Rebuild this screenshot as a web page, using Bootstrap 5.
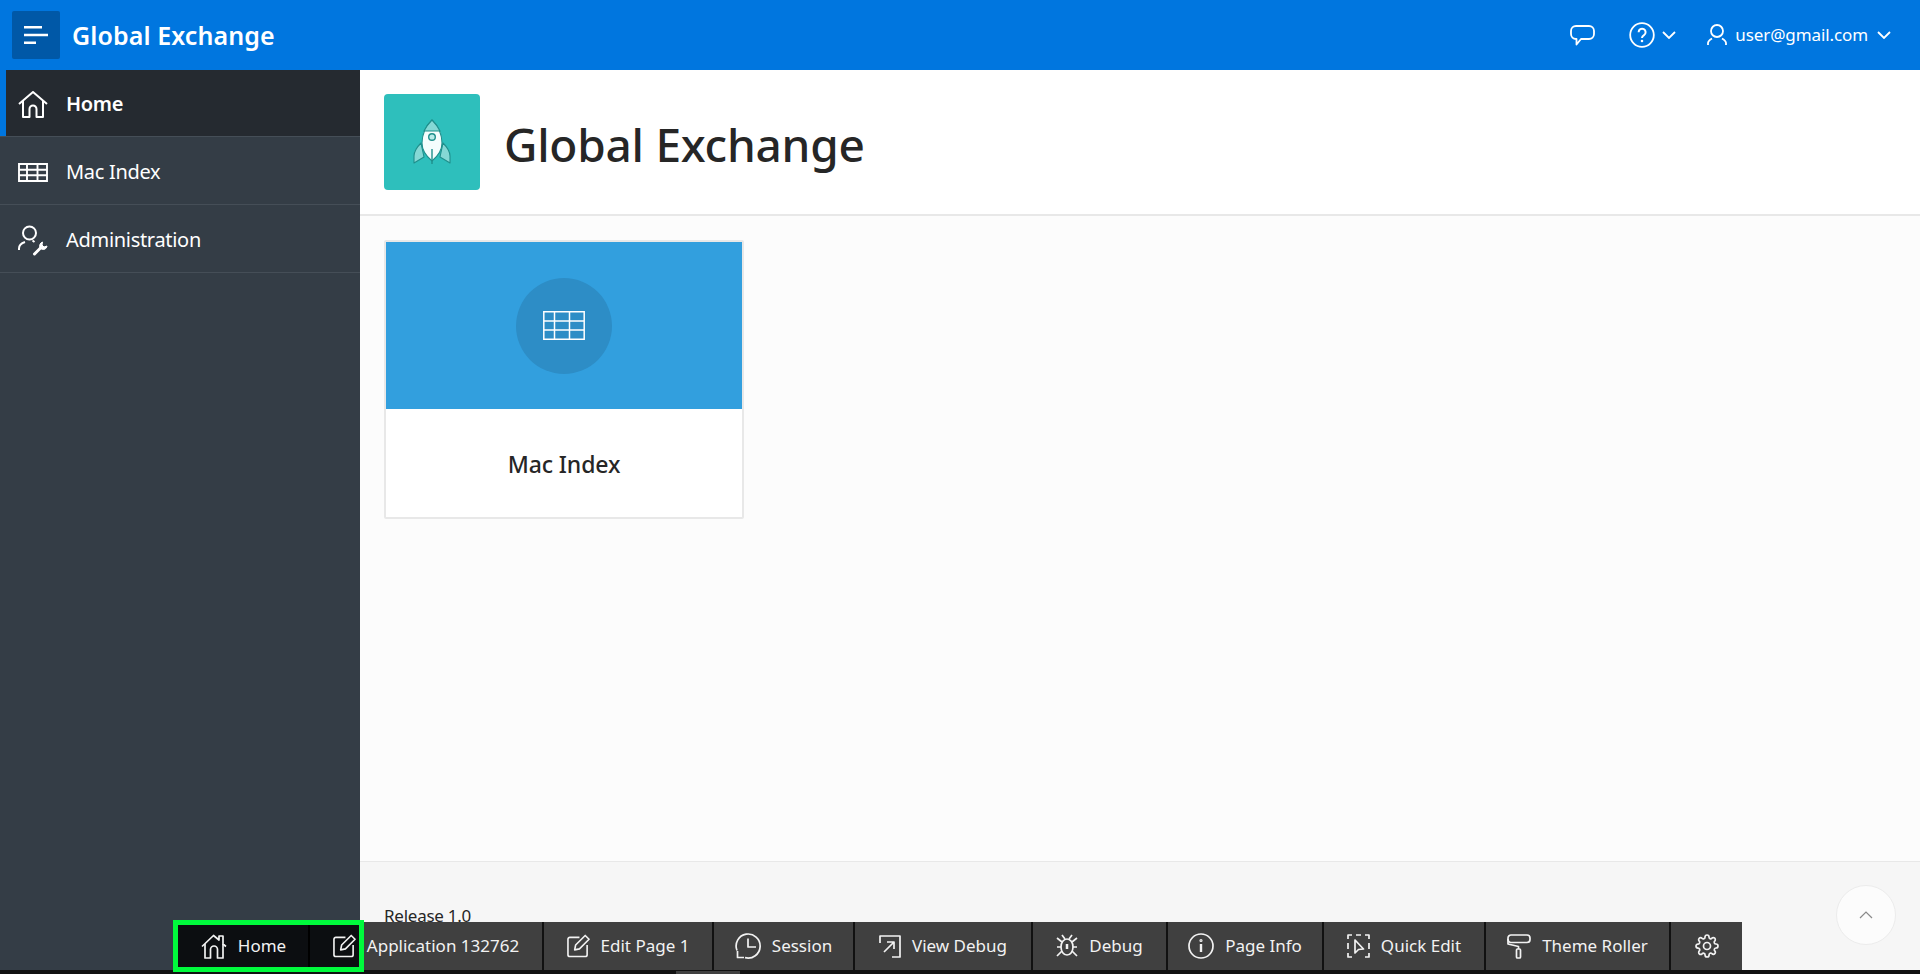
<!DOCTYPE html>
<html lang="en">
<head>
  <meta charset="UTF-8" />
  <title>Global Exchange</title>
  <link href="https://cdn.jsdelivr.net/npm/bootstrap@5.3.2/dist/css/bootstrap.min.css" rel="stylesheet" />
  <style>
    html, body { height: 100%; overflow: hidden; }
    body { font-family: "Noto Sans", "Open Sans", sans-serif; background: #fcfcfc; color: #262626; position: relative; }
    svg { display: block; fill: none; stroke: currentColor; flex: none; }

    .topbar { height: 70px; background: #0076df; color: #fff; padding-left: 12px; padding-right: 29px; }
    .menu-toggle { width: 48px; height: 48px; background: #0058a7; border-radius: 2px; border: 0; margin-right: 12px; color: #fff; }
    .brand-name { font-size: 25px; font-weight: 600; letter-spacing: .1px; padding-top: 2px; }
    .top-link { font-size: 17px; letter-spacing: -.1px; margin: 0 9px 0 8px; }
    .top-help { margin-left: 34px; margin-right: 7px; }
    .top-user { margin-left: 31px; }

    .page-body { height: 904px; }
    .side-nav { width: 360px; background: #343d46; }
    .side-item { height: 68px; color: #fff; font-size: 20px; letter-spacing: -.3px; border-bottom: 1px solid #454e57; padding: 3px 0 0 18px; gap: 18px; }
    .side-item.is-active { background: #252a30; border-left: 6px solid #0076df; padding: 2px 0 0 12px; height: 66px; font-weight: 600; border-bottom: 0; }
    .side-sep { height: 1px; background: #454e57; }

    .hero-bar { height: 146px; background: #fff; border-bottom: 2px solid #e8e8e8; padding-left: 24px; gap: 24px; }
    .hero-icon { width: 96px; height: 96px; background: #2ebfbc; border-radius: 4px; color: #1f8f8c; }
    .hero-title { font-size: 46px; font-weight: 500; letter-spacing: -.25px; margin: 0; padding-top: 5px; color: #262626; }

    .tile-area { padding: 24px; }
    .app-tile { width: 360px; height: 279px; border: 2px solid #e8e8e8; border-radius: 2px; background: #fff; }
    .tile-top { height: 167px; background: #329fde; }
    .tile-circle { width: 96px; height: 96px; border-radius: 50%; background: #2d8dc6; color: #fff; }
    .tile-name { height: 108px; padding-top: 3px; font-size: 23px; font-weight: 500; letter-spacing: -.1px; color: #262626; }

    .page-footer { height: 113px; background: #f6f6f6; border-top: 1px solid #e8e8e8; padding: 41px 24px 0; font-size: 17px; letter-spacing: -.25px; }
    .scroll-top { position: absolute; right: 24px; top: 885px; width: 60px; height: 60px; border-radius: 50%; border: 1px solid #ececec; background: #fcfcfc; color: #8a8a8a; }

    .dev-toolbar { position: absolute; left: 174px; top: 922px; height: 48px; background: #404040; color: #f2f2f2; font-size: 17px; }
    .dev-item { height: 48px; gap: 11px; justify-content: center; border-right: 2px solid #111; white-space: nowrap; }
    .dev-item.is-dark { background: #0c0e11; }
    .dev-item svg { stroke-width: 1.7; stroke-linejoin: round; }
    .dev-home { width: 136px; padding-left: 5px; border-right-color: #000; }
    .dev-edit { width: 54px; border-right: 0; justify-content: flex-start; padding-left: 23px; }
    .dev-app { width: 180px; padding: 0 20px 0 0; }
    .dev-page { width: 170px; }
    .dev-session { width: 141px; }
    .dev-view { width: 178px; }
    .dev-debug { width: 135px; }
    .dev-info { width: 156px; }
    .dev-quick { width: 162px; }
    .dev-theme { width: 185px; }
    .dev-gear { width: 71px; border-right: 0; }

    .green-box { position: absolute; left: 173px; top: 920px; width: 191px; height: 52px; border: 5px solid #00fa3c; pointer-events: none; }
    .bottom-line { position: absolute; left: 0; right: 0; top: 970px; height: 4px; background: #111; }
    .bottom-line::after { content: ""; position: absolute; left: 676px; width: 64px; top: 1px; height: 3px; background: #404040; }
  </style>
</head>
<body>
  <header class="topbar d-flex align-items-center">
    <button class="menu-toggle d-flex align-items-center justify-content-center" type="button" aria-label="Menu">
      <svg width="24" height="18" viewBox="0 0 24 18" stroke-width="2.400"><path d="M0 1.200h18M0 9h24M0 16.800h12" /></svg>
    </button>
    <div class="brand-name">Global Exchange</div>
    <div class="ms-auto d-flex align-items-center">
      <svg width="25" height="21" viewBox="0 0 25 21" stroke-width="1.800"><path d="M6 1h13a5 5 0 0 1 5 5v3a5 5 0 0 1-5 5h-8l-4.500 5.500V14H6a5 5 0 0 1-5-5V6a5 5 0 0 1 5-5z" stroke-linejoin="round" /></svg>
      <svg class="top-help" width="26" height="26" viewBox="0 0 26 26" stroke-width="1.800"><circle cx="13" cy="13" r="11.800" /><path d="M9.600 10.200a3.500 3.500 0 1 1 5.400 3c-1.300.8-2 1.400-2 2.800" stroke-width="2" /><circle cx="13" cy="19" r=".6" stroke-width="1.400" /></svg>
      <svg width="14" height="8" viewBox="0 0 14 8" stroke-width="1.800"><path d="M1 1l6 6 6-6" /></svg>
      <svg class="top-user" width="20" height="22" viewBox="0 0 20 22" stroke-width="1.800"><circle cx="10" cy="7" r="6" /><path d="M1 21v-2c0-2 1.500-3 4-4.500M19 21v-2c0-2-1.500-3-4-4.500" /></svg>
      <span class="top-link">user@gmail.com</span>
      <svg width="14" height="8" viewBox="0 0 14 8" stroke-width="1.800"><path d="M1 1l6 6 6-6" /></svg>
    </div>
  </header>

  <div class="page-body d-flex">
    <nav class="side-nav">
      <div class="side-item is-active d-flex align-items-center">
        <svg width="30" height="27" viewBox="0 0 30 27" stroke-width="2" stroke-linejoin="round"><path d="M1 13L15 1l14 12" /><path d="M5 10v16h6.500v-8a3.500 3.500 0 0 1 7 0v8H25V10" /></svg>
        <span>Home</span>
      </div>
      <div class="side-sep"></div>
      <div class="side-item d-flex align-items-center">
        <svg width="30" height="19" viewBox="0 0 30 19" stroke-width="1.900"><path d="M1 1h28v17H1zM1 6.700h28M1 12.300h28M9 1v17M19.500 1v17" /></svg>
        <span>Mac Index</span>
      </div>
      <div class="side-item d-flex align-items-center">
        <svg width="30" height="31" viewBox="0 0 30 31" stroke-width="2"><circle cx="11.500" cy="8" r="6.500" /><path d="M1 25v-1.500c0-3 3-5.500 6-6.500M14.500 15.500l2 1.500" /><path d="M16.500 29l7-7" stroke-width="3" stroke-linecap="round" /><path d="M22 23c-1-2.500 0-5 2.500-6l-.5 3 2 2 3-1c-.5 3-3.500 5-7 2z" fill="currentColor" stroke-width="1" stroke-linejoin="round" /></svg>
        <span>Administration</span>
      </div>
    </nav>

    <main class="flex-grow-1 d-flex flex-column">
      <div class="hero-bar d-flex align-items-center">
        <div class="hero-icon d-flex align-items-center justify-content-center">
          <svg width="40" height="50" viewBox="0 0 40 50" stroke-width="1.100" stroke-linejoin="round">
            <path d="M9 26C4 31 2 34 2 39v7l10-6zM31 26c5 5 7 8 7 13v7l-10-6z" fill="#85d8d5" />
            <path d="M20 3c-7 7-10 14-10 23 0 7 4 13 10 18 6-5 10-11 10-18 0-9-3-16-10-23z" fill="#f5fdfd" />
            <path d="M20 3c-3 3-6 7-8 11h16c-2-4-5-8-8-11z" fill="#85d8d5" />
            <circle cx="20" cy="20" r="3.300" fill="#b9ebe9" stroke-width="1.400" />
            <path d="M20 32v15" stroke-width="1.400" />
          </svg>
        </div>
        <h1 class="hero-title">Global Exchange</h1>
      </div>

      <div class="tile-area flex-grow-1">
        <div class="app-tile">
          <div class="tile-top d-flex align-items-center justify-content-center">
            <div class="tile-circle d-flex align-items-center justify-content-center">
              <svg width="42" height="29" viewBox="0 0 42 29" stroke-width="1.500"><path d="M.8.800h40.400v27.400H.8zM.8 10h40.400M.8 19h40.400M11.500.8v27.400M26.500.8v27.400" /></svg>
            </div>
          </div>
          <div class="tile-name d-flex align-items-center justify-content-center">Mac Index</div>
        </div>
      </div>

      <footer class="page-footer">Release 1.0</footer>
    </main>
  </div>

  <button class="scroll-top d-flex align-items-center justify-content-center" type="button" aria-label="Top">
    <svg width="14" height="8" viewBox="0 0 14 8" stroke-width="1.200"><path d="M1 7l6-6 6 6" /></svg>
  </button>

  <div class="bottom-line"></div>

  <div class="dev-toolbar d-flex">
    <div class="dev-item dev-home is-dark d-flex align-items-center">
      <svg width="26" height="25" viewBox="0 0 26 25"><path d="M1 12.500L12.500 1.500 18 6V2h4v8l3 2.500" /><path d="M4 10v14h5.500v-8.500a3.500 3.500 0 0 1 7 0V24H22V10" /></svg>
      <span>Home</span>
    </div>
    <div class="dev-item dev-edit is-dark d-flex align-items-center">
      <svg width="23" height="24" viewBox="0 0 24 24"><path d="M13 3H3a2 2 0 0 0-2 2v16a2 2 0 0 0 2 2h16a2 2 0 0 0 2-2V11" /><path d="M8 16l1-5L19 1l4 4-10 10z" /></svg>
    </div>
    <div class="dev-item dev-app d-flex align-items-center">
      <span>Application 132762</span>
    </div>
    <div class="dev-item dev-page d-flex align-items-center">
      <svg width="23" height="24" viewBox="0 0 24 24"><path d="M13 3H3a2 2 0 0 0-2 2v16a2 2 0 0 0 2 2h16a2 2 0 0 0 2-2V11" /><path d="M8 16l1-5L19 1l4 4-10 10z" /></svg>
      <span>Edit Page 1</span>
    </div>
    <div class="dev-item dev-session d-flex align-items-center">
      <svg width="26" height="26" viewBox="0 0 26 26"><path d="M2 17.500A12 12 0 1 1 10 24.600" /><path d="M13 5.500V14h8M2.500 18v6.500H9" /></svg>
      <span>Session</span>
    </div>
    <div class="dev-item dev-view d-flex align-items-center">
      <svg width="22" height="23" viewBox="0 0 22 23"><path d="M1 8V1h20v21h-8" /><path d="M5 17L15 7M8 7h7v7" /></svg>
      <span>View Debug</span>
    </div>
    <div class="dev-item dev-debug d-flex align-items-center">
      <svg width="22" height="24" viewBox="0 0 22 24"><path d="M6 1l3 4M16 1l-3 4M1 13h4M17 13h4M1 4l5 4M21 4l-5 4M1 22l5-5M21 22l-5-5" /><ellipse cx="11" cy="13" rx="6" ry="8" /><path d="M11 10v5" stroke-width="2.500" /></svg>
      <span>Debug</span>
    </div>
    <div class="dev-item dev-info d-flex align-items-center">
      <svg width="26" height="26" viewBox="0 0 26 26"><circle cx="13" cy="13" r="12" /><path d="M13 11v8" stroke-width="2.400" /><circle cx="13" cy="7.500" r=".6" stroke-width="2" /></svg>
      <span>Page Info</span>
    </div>
    <div class="dev-item dev-quick d-flex align-items-center">
      <svg width="23" height="24" viewBox="0 0 23 24"><path d="M5 1H1v4M18 1h4v4M5 23H1v-4M18 23h4v-4M9 1h5M1 9v6M22 9v6" /><path d="M8 6v13l3.500-3.500 5-.5z" /></svg>
      <span>Quick Edit</span>
    </div>
    <div class="dev-item dev-theme d-flex align-items-center">
      <svg width="24" height="25" viewBox="0 0 24 25"><rect x="1" y="1" width="22" height="7.500" rx="3" /><path d="M1 5v5l10.500 2.500V15" /><rect x="9.500" y="15" width="4" height="9" rx="1" /></svg>
      <span>Theme Roller</span>
    </div>
    <div class="dev-item dev-gear d-flex align-items-center">
      <svg width="24" height="24" viewBox="0 0 24 24"><circle cx="12" cy="12" r="3.500" /><path d="M19.400 15a1.650 1.650 0 0 0 .33 1.820l.06.06a2 2 0 0 1 0 2.830 2 2 0 0 1-2.830 0l-.06-.06a1.650 1.650 0 0 0-1.820-.33 1.650 1.650 0 0 0-1 1.510V21a2 2 0 0 1-2 2 2 2 0 0 1-2-2v-.09A1.650 1.650 0 0 0 9 19.400a1.650 1.650 0 0 0-1.820.33l-.06.06a2 2 0 0 1-2.830 0 2 2 0 0 1 0-2.830l.06-.06a1.650 1.650 0 0 0 .33-1.820 1.650 1.650 0 0 0-1.510-1H3a2 2 0 0 1-2-2 2 2 0 0 1 2-2h.09A1.650 1.650 0 0 0 4.600 9a1.650 1.650 0 0 0-.33-1.820l-.06-.06a2 2 0 0 1 0-2.830 2 2 0 0 1 2.830 0l.06.06a1.650 1.650 0 0 0 1.820.33H9a1.650 1.650 0 0 0 1-1.510V3a2 2 0 0 1 2-2 2 2 0 0 1 2 2v.09a1.650 1.650 0 0 0 1 1.510 1.650 1.650 0 0 0 1.820-.33l.06-.06a2 2 0 0 1 2.830 0 2 2 0 0 1 0 2.830l-.06.06a1.650 1.650 0 0 0-.33 1.820V9a1.650 1.650 0 0 0 1.510 1H21a2 2 0 0 1 2 2 2 2 0 0 1-2 2h-.09a1.650 1.650 0 0 0-1.510 1z" /></svg>
    </div>
  </div>
  <div class="green-box"></div>

  <script src="https://cdn.jsdelivr.net/npm/bootstrap@5.3.2/dist/js/bootstrap.bundle.min.js"></script>
</body>
</html>
